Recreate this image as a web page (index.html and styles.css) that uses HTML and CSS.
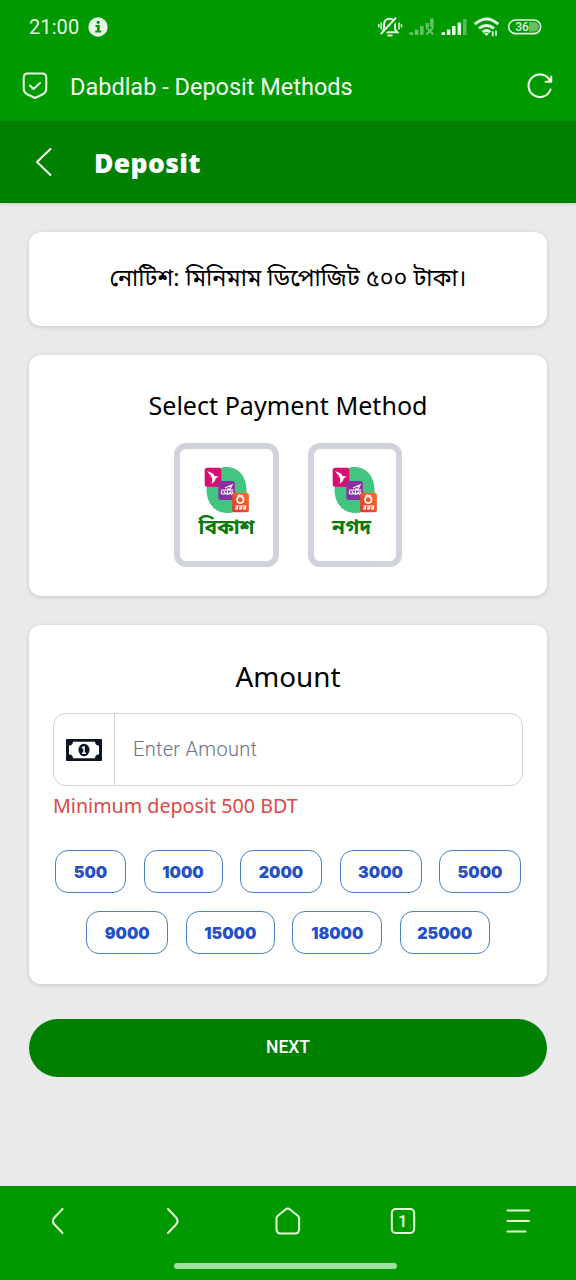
FILE: index.html
```html
<!DOCTYPE html>
<html lang="bn">
<head>
<meta charset="utf-8">
<title>Dabdlab - Deposit Methods</title>
<link rel="stylesheet" href="styles.css">
</head>
<body>
<svg class="defs" width="0" height="0" aria-hidden="true">
  <defs>
    <linearGradient id="orange" x1="0" y1="1" x2="1" y2="0"><stop offset="0" stop-color="#e52e2d"/><stop offset="1" stop-color="#f4772a"/></linearGradient>
    <symbol id="wallets" viewBox="0 0 46 50">
      <path d="M22.500 3C35 3 42.500 13 42.500 27 42.500 40 35 49 24 49 11 49 2.500 40 2.500 25 2.500 12 10 3 22.500 3Z" fill="#42c580"/>
      <rect x=".7" y="3.700" width="16.600" height="19" rx="2.500" fill="#dc0b70"/>
      <path d="M3 7l6 2.500 1.500 2.500 4.500.7-3.300 1.600-1 3-3.200 2.700.8-5-1.800-3.500Z" fill="#fff"/>
      <rect x="14.300" y="17" width="16.600" height="19" rx="2.500" fill="#8d2fa0"/>
      <path d="M21 24l7-3-2.500 5-2-1.500M17 26h12.500M18 27q-2 3 1 3t1-3q2 5 3.500 2v-2q-1 4 1.500 3 2-3 3.500-2 0 4-2.500 1" fill="none" stroke="#fff" stroke-width="1.200"/>
      <rect x="28.200" y="28.700" width="16.700" height="19.600" rx="2.500" fill="url(#orange)"/>
      <circle cx="36.300" cy="35.700" r="3.300" fill="none" stroke="#fff" stroke-width="1.700"/>
      <path d="M33.500 32.500l2-1.800 1.500 1.300 2-1M31.500 42h11M32.500 43l-1 2h2v-3M36.500 43l-1 2h2v-3M40.500 43l-1 2h2v-3" fill="none" stroke="#fff" stroke-width="1.100"/>
    </symbol>
  </defs>
</svg>
<div class="screen">
  <div class="status">
    <span class="clock">21:00</span>
    <svg class="info" width="20" height="20" viewBox="0 0 20 20"><circle cx="10" cy="10" r="9.700" fill="#e6f5e6"/><path d="M7.500 9h4M7.300 14.500h5.800" fill="none" stroke="#090" stroke-width="1.800"/><path d="M10.300 8.200v6.500" stroke="#090" stroke-width="2.600"/><circle cx="10.200" cy="5.300" r="1.600" fill="#090"/></svg>
    <svg class="signals" width="168" height="24" viewBox="0 0 168 24" fill="none" stroke="#e2f6e2">
      <path d="M4.500 17.300h15l-2.400-3V9.500c0-3-2-5.800-5.600-5.800S6 6.500 6 9.500v4.800ZM9.500 20.500h5" stroke-width="2"/>
      <path d="M3 20.500 19 3.500" stroke="#090" stroke-width="4"/><path d="M2.800 19 18 2.700" stroke-width="2"/>
      <path d="M.8 9v3.500M3.200 7.500v7M21 7.500v7M23.500 9v3.500" stroke-width="1.500"/>
      <g transform="translate(-.7 -2)">
        <g stroke-width="3.500" opacity=".45"><path d="M34 19.300v2.700M39.300 16.500v5.500M44.500 13v9M50 10v4M54.500 5.500v8.500"/><path d="M49 14.500l7 7M56 14.500l-7 7" stroke-width="2"/></g>
        <g stroke-width="3.500"><path d="M66 19.300v2.700M71.300 16.500v5.500M76.500 13v9M82 9.500v12.500"/><path d="M87.500 6v16" opacity=".4"/></g>
      </g>
      <g transform="translate(0 -2.300)"><path d="M96.800 11.500q11.700-10.500 23.400 0M101 15.700q7.500-6 15 0" stroke-width="2.900"/><path d="M104.500 19.300q4-3 8 0" stroke-width="2.700"/><path d="M105.700 20h5.600l-2.800 3.300Z" fill="#e2f6e2" stroke="none"/><path d="M114.700 18.500v5M118 18v5" stroke-width="1.700"/></g>
      <rect x="130.700" y="5" width="32" height="13.600" rx="6.800" stroke-width="1.600"/><path d="M151 7h5a4.800 4.800 0 0 1 0 9.600h-5Z" fill="#66bd66" stroke="none"/>
      <text class="battery" x="137.300" y="16.200">36</text>
    </svg>
  </div>
  <div class="address">
    <svg width="28" height="30" viewBox="0 0 28 30" fill="none" stroke="#e8ffe3" stroke-width="2" stroke-linecap="round" stroke-linejoin="round"><path d="M6 2.500h14q4.300 0 4.300 4.300v11q0 3.500-3 5.200L13 27l-8.300-4q-3-1.700-3-5.200v-11Q1.700 2.500 6 2.500Z"/><path d="M8 14.500l3.500 3.500 6.500-6"/></svg>
    <span class="site">Dabdlab - Deposit Methods</span>
    <svg class="reload" width="28" height="28" viewBox="0 0 28 28" fill="none" stroke="#e8ffe3" stroke-width="2.100" stroke-linecap="round" stroke-linejoin="round"><path d="M24.500 17.500A11.300 11.300 0 1 1 24.300 9.500M25.200 4.500v5.300h-5.500"/></svg>
  </div>
  <header class="appbar">
    <svg width="20" height="30" viewBox="0 0 20 30" fill="none" stroke="#fff" stroke-width="2"><path d="M17 1.500 3 15l14 13.500"/></svg>
    <h1 class="title">Deposit</h1>
  </header>
  <main class="content">
    <section class="card notice"><p class="notice-text">নোটিশ: মিনিমাম ডিপোজিট ৫০০ টাকা।</p></section>
    <section class="card payment">
      <h2 class="heading pay-heading">Select Payment Method</h2>
      <div class="methods">
        <div class="method wide"><svg class="wallets" width="46" height="50"><use href="#wallets"/></svg><span class="method-name">বিকাশ</span></div>
        <div class="method"><svg class="wallets" width="46" height="50"><use href="#wallets"/></svg><span class="method-name nagad">নগদ</span></div>
      </div>
    </section>
    <section class="card amount">
      <h2 class="heading amount-heading">Amount</h2>
      <div class="field">
        <div class="field-icon"><svg width="36" height="22" viewBox="0 0 36 22"><path fill="#0d1425" fill-rule="evenodd" d="M1 0h34a1 1 0 0 1 1 1v20a1 1 0 0 1-1 1H1a1 1 0 0 1-1-1V1a1 1 0 0 1 1-1ZM7 2.700q0 3.500-4 4v8.600q4 .5 4 4h22q0-3.500 4-4V6.700q-4-.5-4-4Z"/><ellipse cx="18" cy="11" rx="5.500" ry="6.200" fill="#0d1425"/><path d="M16 9l2-1v6M16 14.300h4" fill="none" stroke="#fff" stroke-width="1.500"/></svg></div>
        <span class="placeholder">Enter Amount</span>
      </div>
      <p class="minimum">Minimum deposit 500 BDT</p>
      <div class="chips first">
        <span class="chip c3">500</span><span class="chip c4n">1000</span><span class="chip c4">2000</span><span class="chip c4">3000</span><span class="chip c4">5000</span>
      </div>
      <div class="chips">
        <span class="chip c4">9000</span><span class="chip c5n">15000</span><span class="chip c5">18000</span><span class="chip c5">25000</span>
      </div>
    </section>
    <div class="next">NEXT</div>
  </main>
  <footer class="bottom">
    <nav class="tools">
      <svg width="28" height="30" viewBox="0 0 28 30"><path d="M18.500 3 10 12q-2.200 3 0 6l8.500 9"/></svg>
      <svg width="28" height="30" viewBox="0 0 28 30"><path d="m9 3 8.500 9q2.200 3 0 6L9 27"/></svg>
      <svg width="28" height="30" viewBox="0 0 28 30"><path d="M2.500 12.500q0-1.800 1.300-2.800l8-6.500q2-1.500 4 0l8 6.500q1.300 1 1.300 2.800V23q0 4.500-4.300 4.500H6.800Q2.500 27.500 2.500 23Z"/></svg>
      <svg width="28" height="30" viewBox="0 0 28 30"><rect x="2.800" y="3" width="22.400" height="24" rx="4"/><text class="tab-count" x="9" y="20.700">1</text></svg>
      <svg width="28" height="30" viewBox="0 0 28 30"><path d="M3.500 4.500H25M3.500 15H25M3.500 25.500h18"/></svg>
    </nav>
    <div class="handle"></div>
  </footer>
</div>
</body>
</html>
```
FILE: styles.css
```css
* { box-sizing: border-box; }
body { margin: 0; background: #eaeaea; font-family: Roboto, "Noto Sans", sans-serif; }
h1, h2, p { margin: 0; font-weight: 400; white-space: nowrap; }
svg { display: block; flex: none; }
.defs { position: absolute; }
.screen { width: 576px; height: 1280px; display: flex; flex-direction: column; overflow: hidden; }
.status { height: 54px; flex: none; background: #090; display: flex; align-items: center; padding-left: 29px; color: #e6f8e6; }
.clock { font-size: 20px; line-height: 24px; letter-spacing: .1px; width: 59px; }
.signals { margin-left: 270px; }
.battery { font: 500 12px Roboto, sans-serif; fill: #e2f6e2; stroke: none; }
.address { height: 67px; flex: none; background: #090; color: #f2fff0; display: flex; align-items: center; padding: 0 22px 3px; }
.site { margin-left: 20px; font-size: 23.500px; line-height: 30px; white-space: nowrap; padding-top: 1px; }
.reload { margin-left: auto; }
.appbar { height: 82px; flex: none; background: #008000; display: flex; align-items: center; padding-left: 34px; box-shadow: 0 1px 3px rgba(0,0,0,.15); }
.title { margin-left: 40px; color: #fff; font: 900 26.500px/34px "Open Sans", "Noto Sans", sans-serif; letter-spacing: .35px; padding-top: 1px; }
.content { flex: 1; padding: 29px 29px 0; }
.card { background: #fff; border-radius: 12px; box-shadow: 0 1px 4px rgba(0,0,0,.16); margin-bottom: 29px; display: flex; flex-direction: column; align-items: center; }
.notice { height: 94px; justify-content: center; padding-top: 4px; }
.notice-text { font-size: 23.400px; line-height: 36px; font-family: "Noto Sans Bengali", "Noto Sans", sans-serif; color: #000; }
.payment { height: 241px; padding-top: 32px; }
.heading { color: #000; font-family: "Noto Sans", sans-serif; line-height: 36px; }
.pay-heading { font-size: 25.100px; }
.methods { display: flex; gap: 29px; margin-top: 20px; }
.method { width: 94px; height: 124px; border: 6px solid #d1d3dc; border-radius: 12px; display: flex; flex-direction: column; align-items: center; padding-top: 15px; }
.wide { width: 105px; }
.method-name { color: #0a7a0a; font: 700 20.800px/26px "Noto Sans Bengali", "Noto Sans", sans-serif; margin-top: 2px; white-space: nowrap; }
.nagad { margin-right: 7px; }
.amount { height: 359px; padding: 32px 24px 0; margin-bottom: 35px; }
.amount-heading { font-size: 27.800px; padding-top: 1px; height: 36px; }
.field { width: 470px; height: 73px; margin-top: 20px; border: 1px solid #d0d4d6; border-radius: 13px; display: flex; align-items: center; }
.field-icon { width: 61px; height: 100%; border-right: 1px solid #d0d4d6; display: flex; align-items: center; justify-content: center; }
.placeholder { margin-left: 18px; padding-bottom: 2px; font-size: 20px; font-weight: 300; color: #6b7280; letter-spacing: .3px; }
.minimum { align-self: flex-start; margin-top: 5px; margin-bottom: 1px; font: 400 19.700px/30px "Noto Sans", sans-serif; color: #dd4747; }
.chips { display: flex; gap: 17.500px; margin-top: 18px; }
.chips.first { margin-top: 28px; }
.chip { height: 43px; width: 82px; border: 1.300px solid #4a80c4; border-radius: 13px; color: #2450c4; font: 900 16px/42px Inter, "Noto Sans", sans-serif; text-align: center; }
.c3 { width: 71px; }
.c4n { width: 79px; }
.c5 { width: 90px; }
.c5n { width: 89px; }
.next { height: 58px; border-radius: 29px; background: #008000; color: #fff; text-align: center; font-size: 17.500px; font-weight: 500; line-height: 57px; }
.bottom { height: 94px; flex: none; background: #090; padding-top: 20px; }
.tools { display: grid; grid-template-columns: repeat(5, 1fr); justify-items: center; fill: none; stroke: #e5ffd9; stroke-width: 2; stroke-linecap: round; stroke-linejoin: round; }
.tab-count { font: 500 16.500px Roboto, sans-serif; fill: #e5ffd9; stroke: none; }
.handle { width: 223px; height: 6px; border-radius: 3px; background: #a0dfa0; margin: 27px 0 0 174px; }
```
